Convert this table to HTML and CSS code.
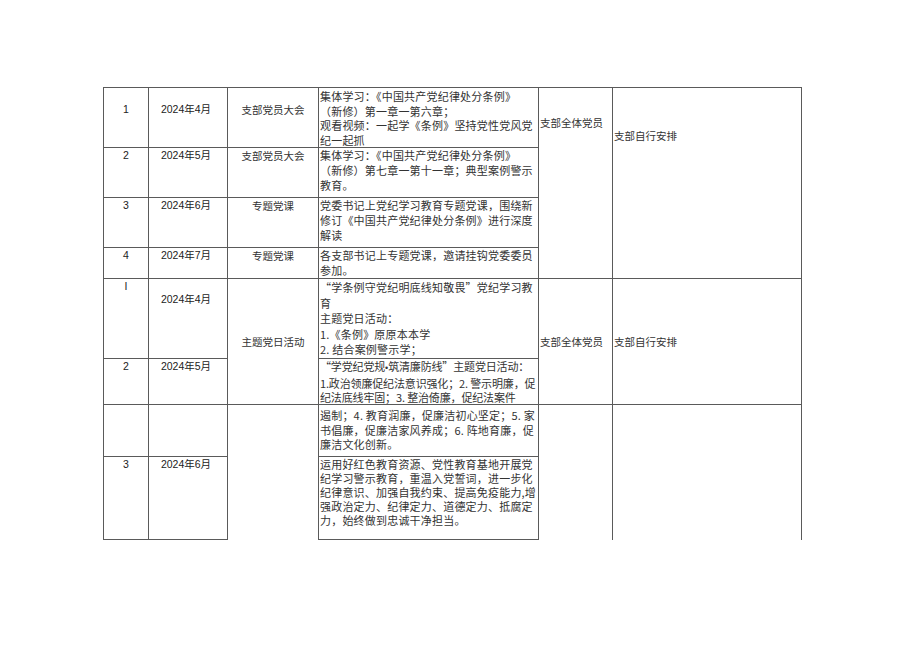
FILE: index.html
```html
<!DOCTYPE html>
<html lang="zh-CN">
<head>
<meta charset="utf-8">
<title>党纪学习教育安排</title>
<link rel="stylesheet" href="styles.css">
</head>
<body>
<div class="page">
  <table class="plan">
    <colgroup>
      <col class="c-no">
      <col class="c-date">
      <col class="c-form">
      <col class="c-content">
      <col class="c-who">
      <col class="c-note">
    </colgroup>
    <tbody>
      <tr class="r60">
        <td class="num first">1</td>
        <td class="date first">2024年4月</td>
        <td class="form first">支部党员大会</td>
        <td class="content fourline">集体学习：《中国共产党纪律处分条例》<br>（新修）第一章一第六章；<br>观看视频：一起学《条例》坚持党性党风党<br>纪一起抓</td>
        <td class="who who-top" rowspan="4">支部全体党员</td>
        <td class="note note-top" rowspan="4">支部自行安排</td>
      </tr>
      <tr class="r50">
        <td class="num">2</td>
        <td class="date">2024年5月</td>
        <td class="form">支部党员大会</td>
        <td class="content">集体学习：《中国共产党纪律处分条例》<br>（新修）第七章一第十一章；典型案例警示<br>教育。</td>
      </tr>
      <tr class="r50">
        <td class="num">3</td>
        <td class="date">2024年6月</td>
        <td class="form">专题党课</td>
        <td class="content">党委书记上党纪学习教育专题党课，围绕新<br>修订《中国共产党纪律处分条例》进行深度<br>解读</td>
      </tr>
      <tr class="r31">
        <td class="num">4</td>
        <td class="date">2024年7月</td>
        <td class="form">专题党课</td>
        <td class="content">各支部书记上专题党课，邀请挂钩党委委员<br>参加。</td>
      </tr>
      <tr class="r80">
        <td class="num">I</td>
        <td class="date date-low">2024年4月</td>
        <td class="form middle" rowspan="2">主题党日活动</td>
        <td class="content roomy">“学条例守党纪明底线知敬畏”党纪学习教<br>育<br>主题党日活动：<br>1.《条例》原原本本学<br>2. 结合案例警示学；</td>
        <td class="who middle" rowspan="2">支部全体党员</td>
        <td class="note middle" rowspan="2">支部自行安排</td>
      </tr>
      <tr class="r45">
        <td class="num">2</td>
        <td class="date">2024年5月</td>
        <td class="content snug">“学党纪党规<span class="dot">•</span>筑清廉防线”主题党日活动：<br>1.政治领廉促纪法意识强化；2. 警示明廉，促<br>纪法底线牢固；3. 整治倚廉，促纪法案件</td>
      </tr>
      <tr class="r52">
        <td class="num"></td>
        <td class="date"></td>
        <td class="form open" rowspan="2"></td>
        <td class="content tight-top">遏制；4. 教育润廉，促廉洁初心坚定；5. 家<br>书倡廉，促廉洁家风养成；6. 阵地育廉，促<br>廉洁文化创新。</td>
        <td class="who open" rowspan="2"></td>
        <td class="note open" rowspan="2"></td>
      </tr>
      <tr class="r83">
        <td class="num">3</td>
        <td class="date">2024年6月</td>
        <td class="content dense">运用好红色教育资源、党性教育基地开展党<br>纪学习警示教育，重温入党誓词，进一步化<br>纪律意识、加强自我约束、提高免疫能力,增<br>强政治定力、纪律定力、道德定力、抵腐定<br>力，始终做到忠诚干净担当。</td>
      </tr>
    </tbody>
  </table>
</div>
</body>
</html>
```
FILE: styles.css
```css
html, body {
  margin: 0;
  padding: 0;
  background: #ffffff;
}

.page {
  padding: 87px 0 0 103px;
}

.plan {
  border-collapse: collapse;
  table-layout: fixed;
  width: 698px;
  color: #333333;
  font-family: "Noto Sans CJK SC", sans-serif;
  font-size: 10.5px;
  line-height: 15px;
}

.c-no { width: 45px; }
.c-date { width: 79px; }
.c-form { width: 91px; }
.c-content { width: 220px; }
.c-who { width: 74px; }
.c-note { width: 189px; }

.plan td {
  border: 1px solid #5a5a5a;
  padding: 0 1px;
  vertical-align: top;
  overflow: hidden;
}

.r60 { height: 60px; }
.r50 { height: 50px; }
.r31 { height: 31px; }
.r80 { height: 80px; }
.r45 { height: 45px; }
.r52 { height: 52px; }
.r83 { height: 83px; }

.plan td.num,
.plan td.date {
  text-align: center;
  font-family: "Liberation Sans", "Noto Sans CJK SC", sans-serif;
  color: #222222;
}

.plan td.date {
  padding-right: 5px;
}

.plan td.form {
  text-align: center;
}

.plan td.first {
  padding-top: 14px;
}

.plan td.date-low {
  padding-top: 13px;
}

.plan td.content {
  font-size: 11px;
  letter-spacing: 0.2px;
  white-space: nowrap;
  text-align: left;
}

.plan td.fourline {
  line-height: 14.6px;
  padding-top: 1px;
}

.plan td.snug {
  letter-spacing: -0.15px;
  line-height: 14.3px;
}

.dot {
  font-family: "Liberation Sans", sans-serif;
  font-size: 9px;
}

.plan td.roomy {
  line-height: 15.4px;
  padding-top: 1px;
}

.plan td.tight-top {
  line-height: 14.5px;
  padding-top: 3px;
}

.plan td.dense {
  line-height: 14px;
}

.plan td.who,
.plan td.note {
  text-align: left;
}

.plan td.who-top {
  padding-top: 27px;
}

.plan td.note-top {
  padding-top: 40px;
}

.plan td.middle {
  vertical-align: middle;
  padding-top: 0;
}

.plan td.open {
  border-bottom: none;
}
```
